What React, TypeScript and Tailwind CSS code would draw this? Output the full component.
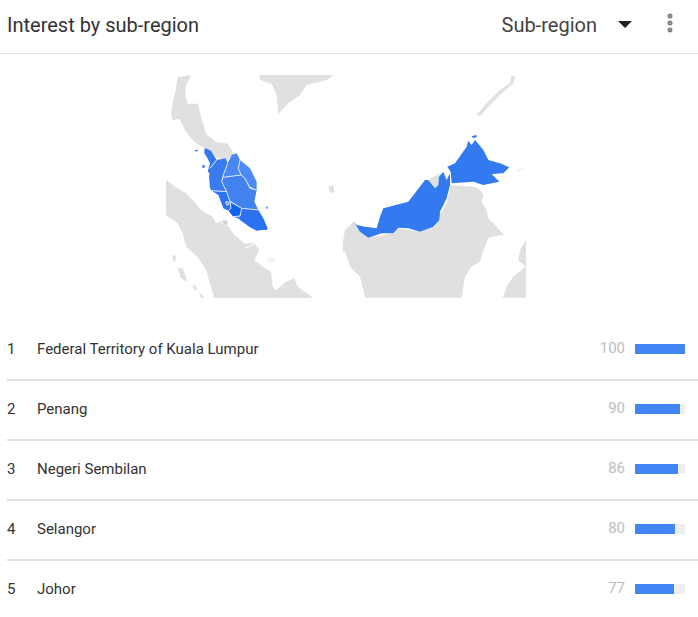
import { MoreVertical } from 'lucide-react';

const rows = [
  { rank: 1, name: 'Federal Territory of Kuala Lumpur', value: 100 },
  { rank: 2, name: 'Penang', value: 90 },
  { rank: 3, name: 'Negeri Sembilan', value: 86 },
  { rank: 4, name: 'Selangor', value: 80 },
  { rank: 5, name: 'Johor', value: 77 },
];

function RegionMap() {
  return (
    <svg width="360" height="223" viewBox="166 75 360 223" className="block blur-[0.4px]">
      {/* each group uses the coordinates of a 3x crop of the map */}
      <g transform="translate(166 72) scale(0.3333)" fill="#e0e0e0">
        <path d="M35 15L75 10L60 40L58 70L65 95L95 95L110 150L120 185L150 210L185 215L205 245L180 270L125 240L110 225L85 210L60 180L40 140L20 145L15 125L20 95L30 50Z" />
      </g>
      <g transform="translate(160 70) scale(0.3333)" fill="#e0e0e0">
        <path d="M298 15L522 15L500 30L440 45L420 75L385 100L355 132L350 75L335 42L300 30Z" />
        <path d="M505 350L520 345L523 365L510 370Z" />
        <path d="M570 470L550 510L548 545L570 545Z" />
      </g>

      {/* Sumatra */}
      <g transform="translate(166 200) scale(0.3333)" fill="#e0e0e0">
        <path d="M0 -60L30 -38L60 -20L80 0L105 30L140 50L150 70L175 60L190 85L205 105L235 130L265 130L280 150L265 180L290 200L315 215L320 260L330 270L360 245L385 235L395 260L430 285L440 294L145 294L120 210L95 170L60 140L50 100L35 70L0 45Z" />
        <path d="M35 205L50 205L65 245L45 235Z" />
        <path d="M80 255L90 258L95 272L85 270Z" />
        <path d="M100 280L108 283L115 294L105 294Z" />
        <path d="M20 165L30 168L28 185L20 182Z" />
        <path d="M305 175L325 172L322 188L310 186Z" fill="#f3f3f3" />
        <path d="M198 85L215 110L240 120L262 125M235 145L272 130M205 100L235 122" fill="none" stroke="#fff" strokeWidth="3" />
        <path d="M168 62C175 55 188 62 186 72C182 80 170 78 168 62Z" fill="#d2d2d2" stroke="#fff" strokeWidth="3" />
      </g>

      {/* Peninsular Malaysia */}
      <g transform="translate(195 140) scale(0.3333)">
        <path fill="#3679ef" d="M28 28L32 25L48 32L65 60L45 85L45 100L38 95L45 70L35 50L28 40Z" />
        <path fill="#3a7bf0" d="M65 60L92 55L98 70L85 105L80 125L95 155L50 152L45 145L42 110L45 85Z" />
        <path fill="#4a87f2" d="M98 70L110 45L125 40L135 60L130 85L138 105L85 112L85 105Z" />
        <path fill="#4d89f2" d="M135 60L165 85L185 125L185 150L165 140L150 115L138 105L130 85Z" />
        <path fill="#4383f1" d="M85 112L138 105L150 115L165 145L185 150L178 185L190 210L140 205L105 182L95 155L80 125Z" />
        <path fill="#2a72ef" d="M50 152L95 155L105 185L108 205L100 212L85 205L70 165Z" />
        <path fill="#0f62ee" d="M105 185L140 205L135 228L115 230L100 212L108 205Z" />
        <path fill="#4383f1" d="M115 230L135 228L130 236Z" />
        <path fill="#2a72ef" d="M140 205L190 210L205 235L218 265L215 270L200 270L185 272L165 262L130 236L135 228Z" />
        <path fill="#2a72ef" d="M0 30L8 29L8 34L0 34Z" />
        <path fill="#2a72ef" d="M22 76L29 75L29 83L22 83Z" />
        <path fill="#4a87f2" d="M213 200L218 200L218 206L213 206Z" />
        {/* state lines */}
        <path
          fill="none"
          stroke="#dbe7fd"
          strokeWidth="3"
          strokeLinejoin="round"
          d="M65 60L45 85M98 70L85 105L80 125L95 155L105 185L140 205L135 228L115 230M85 112L138 105L150 115L165 145L185 150M135 60L130 85L138 105M50 152L95 155M105 185L108 205L100 212M140 205L190 210"
        />
        <path fill="#6f9ff5" stroke="#dbe7fd" strokeWidth="3" d="M92 186C97 182 103 186 102 192C100 198 93 198 92 186Z" />
      </g>

      {/* Borneo */}
      <g transform="translate(340 70) scale(0.3333)" fill="#e0e0e0">
        <path d="M40 455L85 503L160 490L175 475L240 485L285 470L295 440L320 400L332 345L400 350L415 355L430 375L425 395L440 420L445 445L470 470L492 495L465 498L445 505L430 540L420 575L395 590L375 620L365 683L75 683L60 620L30 590L8 520L15 480Z" />
        <path d="M525 20L520 40L490 65L460 95L420 138L410 135L440 100L480 60L510 40L515 15Z" />
        <path d="M558 510L540 540L535 570L556 590L520 620L500 650L488 683L558 683Z" />
        <path d="M530 300L555 292L550 300L535 306Z" fill="#f0f0f0" />
      </g>
      <g transform="translate(340 130) scale(0.3333)">
        <path fill="#e0e0e0" d="M265 150L300 130L297 140L295 165L285 175Z" />
        <path fill="#3379ef" d="M40 272L50 285L75 290L110 295L120 260L130 235L205 215L255 150L265 150L285 175L295 165L297 140L310 125L320 150L330 130L330 165L320 205L300 245L298 270L280 290L240 305L205 295L175 293L160 310L125 310L85 323L60 305Z" />
        <path fill="#3379ef" d="M322 110L345 100L380 50L385 32L395 45L405 30L430 60L445 90L480 100L508 112L490 130L455 132L478 155L430 165L400 155L335 160L332 125Z" />
        <path fill="#3379ef" d="M396 18L410 15L410 22L398 24Z" />
      </g>
    </svg>
  );
}

export default function App() {
  return (
    <div className="h-[617px] w-[698px] overflow-hidden bg-white font-['Roboto',sans-serif]">
      {/* Header */}
      <div className="flex h-[54px] items-center border-b border-[#e0e0e0] pb-[4px] pl-[7px]">
        <h2 className="text-[20px] font-normal text-[#333]">Interest by sub-region</h2>
        <div className="ml-auto flex items-center">
          <span className="text-[20px] text-[#444]">Sub-region</span>
          <div className="ml-[21px] h-0 w-0 border-x-[7px] border-t-[7px] border-x-transparent border-t-[#212121]" />
        </div>
        <MoreVertical className="mb-[4px] ml-[26px] mr-[16px] h-[24px] w-[24px] text-[#808080]" strokeWidth={3} />
      </div>

      {/* Map */}
      <div className="mb-[23px] mt-[21px] flex pl-[166px]">
        <RegionMap />
      </div>

      {/* Ranked list */}
      <div className="pl-[7px]">
        {rows.map((row) => (
          <div
            key={row.rank}
            className="flex h-[60px] items-center border-b-2 border-[#e0e0e0] pb-[2px] pr-[13px] text-[15px] text-[#333] last:border-transparent"
          >
            <span className="w-[30px]">{row.rank}</span>
            <span>{row.name}</span>
            <span className="mb-[2px] ml-auto mr-[10px] text-[#bdbdbd]">{row.value}</span>
            <div className="h-[10px] w-[50px] bg-[#eeeeee]">
              <div className="h-full bg-[#4285f4]" style={{ width: `${row.value}%` }} />
            </div>
          </div>
        ))}
      </div>
    </div>
  );
}
